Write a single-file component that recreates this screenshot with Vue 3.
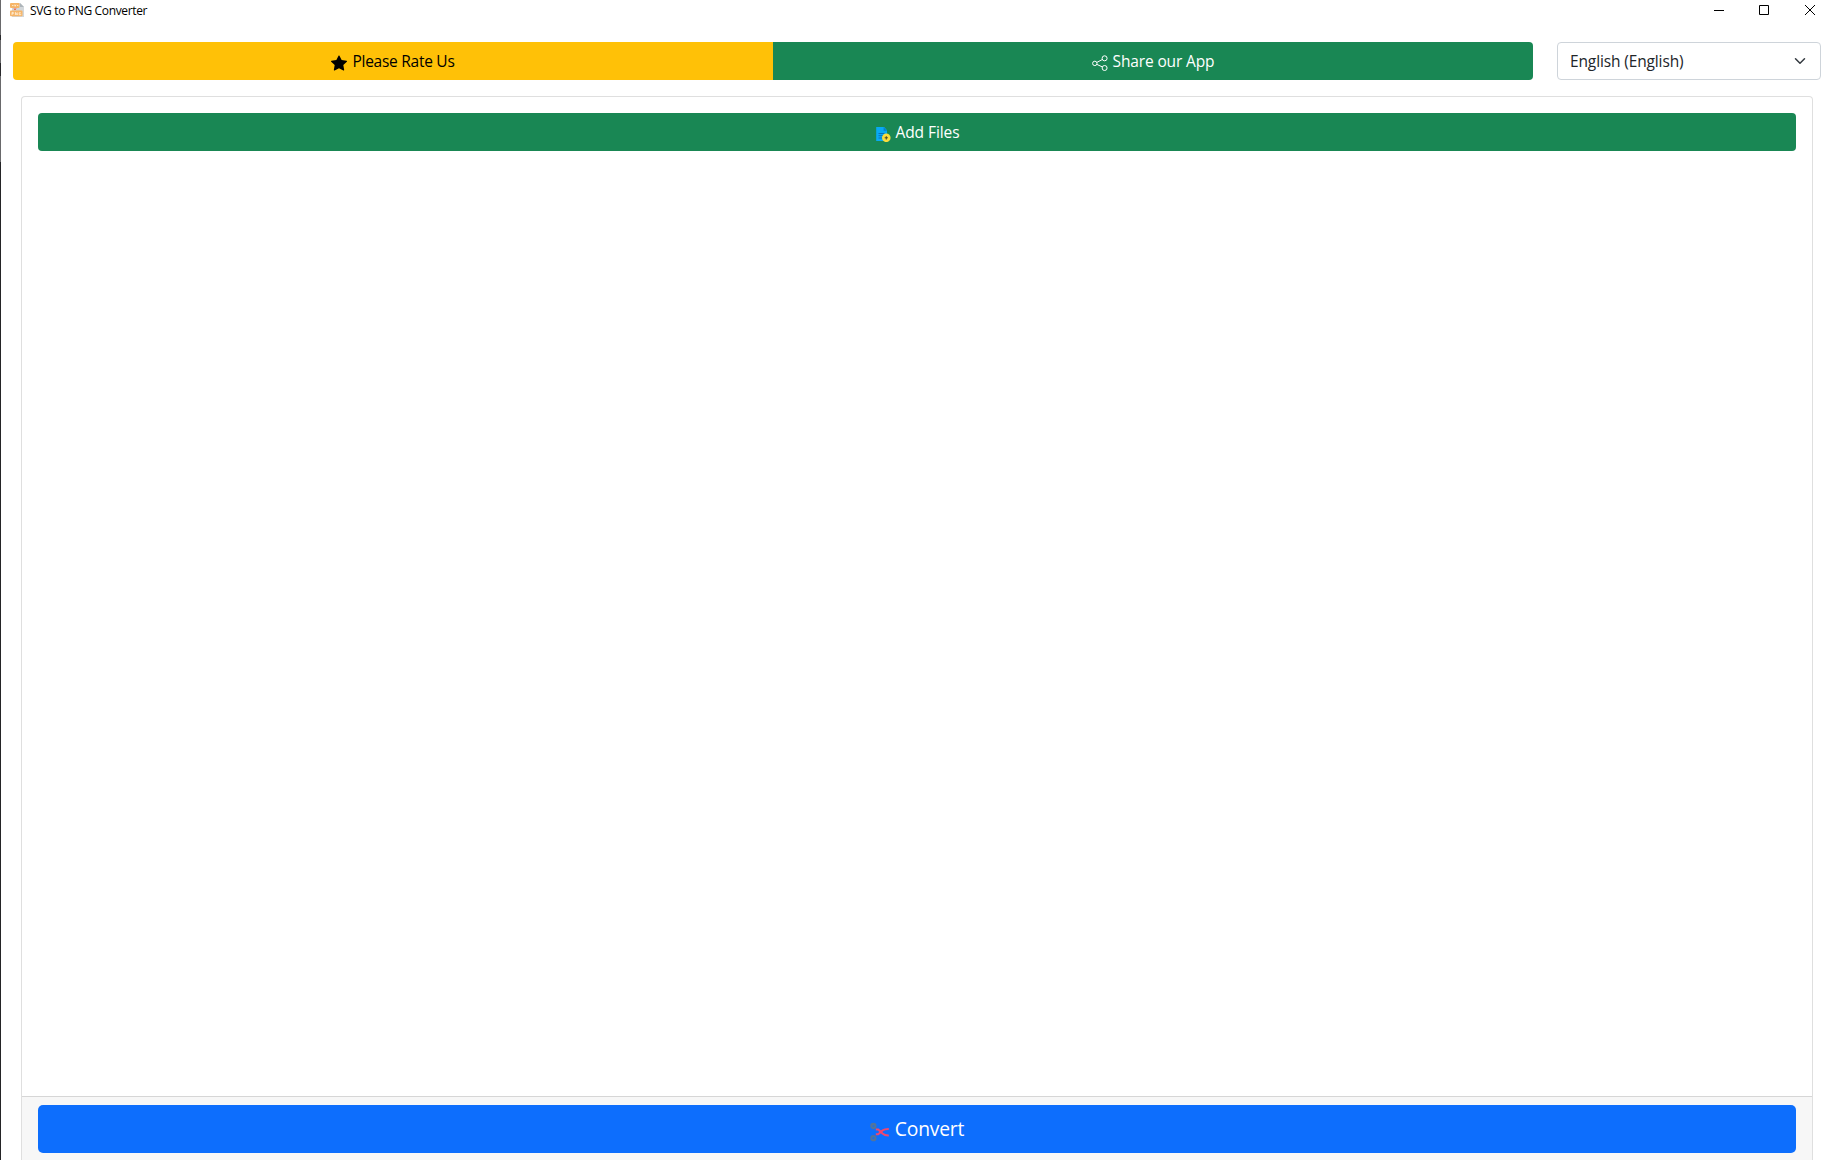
<script setup>
import { ref } from 'vue'

const language = ref('English (English)')
</script>

<template>
  <div class="window">
    <div class="edge"></div>
    <header class="titlebar">
      <svg class="app-icon" viewBox="0 0 16 16">
        <path d="M2 1h8l4 4v10H2z" fill="#d3d7da" />
        <path d="M10 1l4 4h-4z" fill="#aeb5ba" />
        <rect x="0" y="1" width="9.5" height="5" rx="1" fill="#f6b568" />
        <rect x="0" y="8.5" width="12.5" height="5.8" rx="1" fill="#f6b568" />
        <path d="M2 3.5h1.5M4.5 2.7l.7 1.6.7-1.6M7 3.5h1.3M2 13v-2.6h1.3v1.3H2M5.4 13v-2.6l1.8 2.6v-2.6M10.8 10.7H9.2v2h1.6v-1" fill="none" stroke="#fff3df" stroke-width=".8" />
        <path d="M5 5.8v1.7M3.8 6.7l1.2 1.3L6.2 6.7" fill="none" stroke="#ed7161" stroke-width="1" />
      </svg>
      <span class="title">SVG to PNG Converter</span>
      <div class="controls">
        <svg viewBox="0 0 10 10"><path d="M0 5.5h10" /></svg>
        <svg class="maximize" viewBox="0 0 10 10"><path d="M.5.5h9v9h-9z" /></svg>
        <svg viewBox="0 0 10 10"><path d="M0 0l10 10M10 0L0 10" /></svg>
      </div>
    </header>

    <nav class="toolbar">
      <div class="group">
        <button class="btn rate">
          <svg class="icon" viewBox="0 0 16 16" fill="currentColor">
            <path d="M3.612 15.443c-.386.198-.824-.149-.746-.592l.83-4.73L.173 6.765c-.329-.314-.158-.888.283-.95l4.898-.696L7.538.792c.197-.39.73-.39.927 0l2.184 4.327 4.898.696c.441.062.612.636.282.95l-3.522 3.356.83 4.73c.078.443-.36.79-.746.592L8 13.187l-4.389 2.256z" />
          </svg>
          <span class="rate-text">Please Rate Us</span>
        </button>
        <button class="btn share">
          <svg class="icon" viewBox="0 0 16 16" fill="none" stroke="currentColor">
            <circle cx="2.8" cy="8.4" r="2.2" />
            <circle cx="12.6" cy="3.3" r="2.5" />
            <circle cx="12.6" cy="13" r="2.5" />
            <path d="M4.9 7.4l5.4-2.9M4.9 9.4l5.4 2.5" />
          </svg>
          <span class="share-text">Share our App</span>
        </button>
      </div>
      <div class="select">
        <span class="select-text">{{ language }}</span>
        <svg viewBox="0 0 16 16"><path d="m2 5 6 6 6-6" /></svg>
      </div>
    </nav>

    <main class="card">
      <section class="card-body">
        <button class="btn add">
          <svg class="icon" viewBox="0 0 16 16">
            <path d="M1.2 1h8l2.8 3.2V15H1.2z" fill="#08a9f4" />
            <path d="M8.6 1l3.4 3.8H8.6z" fill="#087fc8" />
            <path d="M3.5 7.5h6M3.5 9.7h5M3.5 12h4" stroke="#0870b9" stroke-width="1" />
            <circle cx="11.3" cy="11.8" r="4.3" fill="#fbdc3c" />
            <path d="M11.3 10.2v3.2M9.7 11.8h3.2" stroke="#4c4a2b" stroke-width="1.1" />
          </svg>
          <span class="add-text">Add Files</span>
        </button>
      </section>
      <footer class="card-footer">
        <button class="btn convert">
          <svg class="cut" viewBox="0 0 20 20">
            <g fill="none" stroke="#52749c" stroke-width="2.3">
              <circle cx="3.4" cy="4" r="2" />
              <circle cx="3.4" cy="16.2" r="2" />
            </g>
            <path d="M5.8 7.6h2.4l4.6 4.2q1.8 1.7 6 1.6M5.8 12.2h2.4l4.6-3.9q1.8-1.5 6-1.4" fill="none" stroke="#f0476f" stroke-width="2" />
          </svg>
          <span class="convert-text">Convert</span>
        </button>
      </footer>
    </main>
  </div>
</template>

<style>
body {
  background: #fff;
  overflow: hidden;
}
</style>

<style scoped>
.window {
  position: relative;
  box-sizing: border-box;
  height: 1160px;
  display: flex;
  flex-direction: column;
  background: #fff;
  color: #212529;
  font-family: 'Segoe UI', 'Open Sans', 'Noto Sans', sans-serif;
  font-size: 15.5px;
  overflow: hidden;
}
.edge {
  position: absolute;
  left: 0;
  top: 0;
  width: 1px;
  height: 100%;
  background: linear-gradient(#69696b 35px, #29292b 35px 40px, #69696b 40px 63px, #29292b 63px 76px, #69696b 76px 162px, #242426 162px);
}
.titlebar {
  flex: none;
  height: 42px;
  display: flex;
  align-items: flex-start;
  box-sizing: border-box;
  padding: 0 16px 0 10px;
  color: #000;
}
.app-icon {
  width: 16px;
  height: 16px;
  margin-top: 2px;
}
.title {
  margin-left: 4px;
  font-size: 12px;
  line-height: 21px;
  letter-spacing: -0.34px;
  white-space: nowrap;
}
.controls {
  margin-left: auto;
  padding-top: 5px;
  display: flex;
}
.controls svg {
  width: 10px;
  height: 10px;
  fill: none;
  stroke: #000;
}
.controls .maximize {
  margin: 0 36px 0 35px;
}
.toolbar {
  flex: none;
  display: flex;
  gap: 24px;
  padding: 0 10px 0 13px;
}
.group {
  flex: 1;
  display: flex;
}
.btn {
  border: 0;
  padding: 0;
  height: 38px;
  display: flex;
  align-items: center;
  justify-content: center;
  font: inherit;
  line-height: 24px;
  color: #fff;
  white-space: nowrap;
}
.rate,
.share {
  flex: 1;
}
.rate {
  background: #ffc107;
  color: #000;
  border-radius: 4px 0 0 4px;
}
.share {
  background: #198754;
  border-radius: 0 4px 4px 0;
}
.rate-text {
  letter-spacing: -0.27px;
}
.share-text {
  letter-spacing: -0.13px;
}
.select-text {
  line-height: 24px;
  letter-spacing: -0.13px;
}
.add-text {
  letter-spacing: -0.08px;
}
.convert-text {
  letter-spacing: -0.2px;
}
.icon {
  width: 16px;
  height: 16px;
  margin: 3px 5px 0 0;
}
.select {
  box-sizing: border-box;
  width: 264px;
  height: 38px;
  padding: 0 12px;
  display: flex;
  align-items: center;
  justify-content: space-between;
  border: 1px solid #ced4da;
  border-radius: 4px;
}
.select svg {
  width: 16px;
  height: 12px;
  fill: none;
  stroke: #343a40;
  stroke-width: 2;
  stroke-linecap: round;
  stroke-linejoin: round;
}
.card {
  flex: 1;
  margin: 16px 18px 0 21px;
  display: flex;
  flex-direction: column;
  border: 1px solid #dfdfdf;
  border-bottom: 0;
  border-radius: 4px 4px 0 0;
}
.card-body {
  flex: 1;
  padding: 16px;
}
.add {
  width: 100%;
  background: #198754;
  border-radius: 4px;
}
.card-footer {
  border-top: 1px solid #d6d6d6;
  background: #f7f7f7;
  padding: 8px 16px 7px;
}
.convert {
  width: 100%;
  height: 48px;
  background: #0d6efd;
  border-radius: 5px;
  font-size: 19.3px;
}
.cut {
  width: 20px;
  height: 20px;
  margin: 5px 5px 0 0;
}
</style>
